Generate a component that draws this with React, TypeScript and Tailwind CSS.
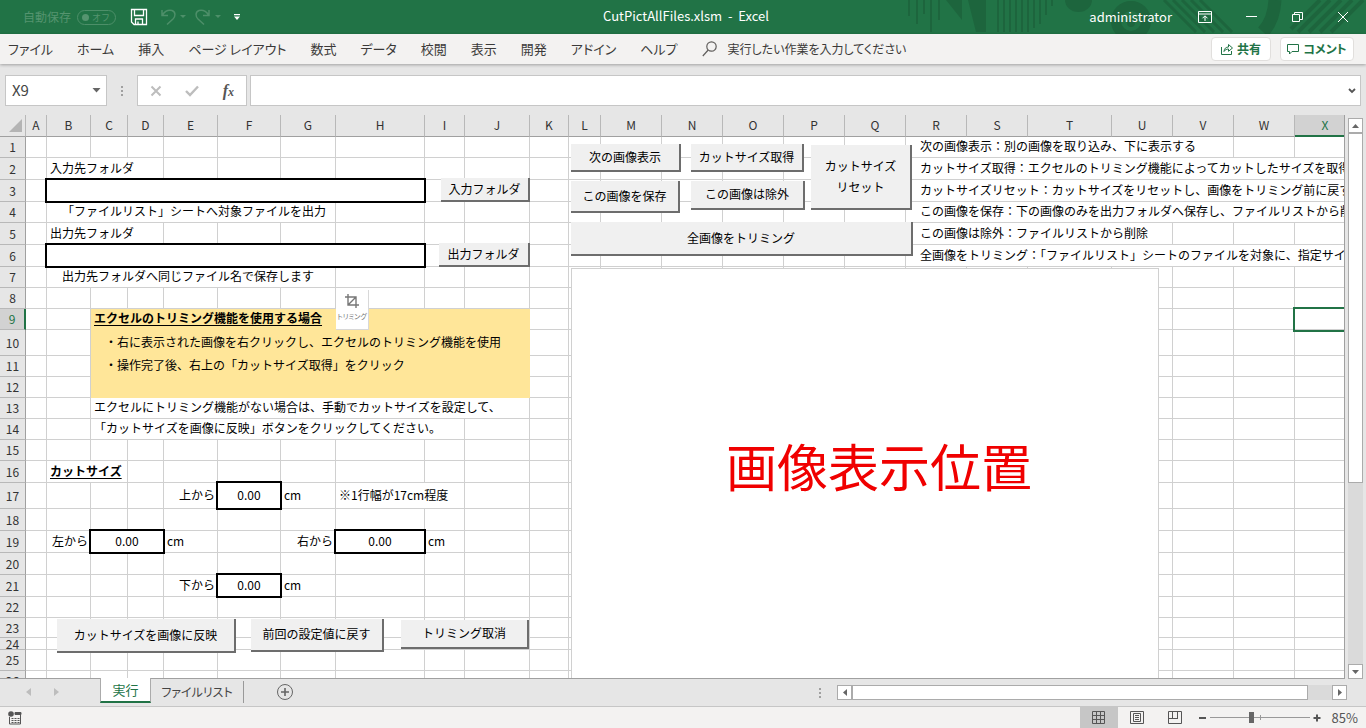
import React from "react";

type Cell = {
  span?: number;
  text?: string;
  htmlFor?: string;
  input?: string;
  label?: string;
  className?: string;
};

const columns: [string, number][] = [
  ["A", 21],
  ["B", 44],
  ["C", 37],
  ["D", 36],
  ["E", 54],
  ["F", 63],
  ["G", 55],
  ["H", 89],
  ["I", 40],
  ["J", 65],
  ["K", 39],
  ["L", 32],
  ["M", 61],
  ["N", 61],
  ["O", 61],
  ["P", 61],
  ["Q", 61],
  ["R", 61],
  ["S", 61],
  ["T", 84],
  ["U", 61],
  ["V", 61],
  ["W", 61],
  ["X", 61],
];

const rowHeights = [
  21, 22, 22, 21, 22, 22, 21, 21, 21, 26, 21, 21, 21, 21, 21, 22, 26, 22, 22,
  22, 22, 21, 20, 12, 21, 21,
];

const yellow = "bg-[#ffe699] border-[#ffe699]";

// keyed by "column + row", like the sheet itself
const cells: Record<string, Cell> = {
  R1: { span: 5, text: "次の画像表示：別の画像を取り込み、下に表示する", className: "pl-[14px]" },
  B2: { span: 3, text: "入力先フォルダ", htmlFor: "in-folder" },
  R2: {
    span: 7,
    text: "カットサイズ取得：エクセルのトリミング機能によってカットしたサイズを取得",
    className: "pl-[14px]",
  },
  B3: { span: 7, input: "", label: "in-folder" },
  R3: {
    span: 7,
    text: "カットサイズリセット：カットサイズをリセットし、画像をトリミング前に戻す",
    className: "pl-[14px]",
  },
  B4: { span: 6, text: "「ファイルリスト」シートへ対象ファイルを出力", className: "pl-[15px]" },
  R4: {
    span: 7,
    text: "この画像を保存：下の画像のみを出力フォルダへ保存し、ファイルリストから削除",
    className: "pl-[14px]",
  },
  B5: { span: 3, text: "出力先フォルダ", htmlFor: "out-folder" },
  R5: { span: 4, text: "この画像は除外：ファイルリストから削除", className: "pl-[14px]" },
  B6: { span: 7, input: "", label: "out-folder" },
  R6: {
    span: 7,
    text: "全画像をトリミング：「ファイルリスト」シートのファイルを対象に、指定サイズ",
    className: "pl-[14px]",
  },
  B7: { span: 6, text: "出力先フォルダへ同じファイル名で保存します", className: "pl-[15px]" },
  C9: {
    span: 8,
    text: "エクセルのトリミング機能を使用する場合",
    className: `${yellow} pl-[3px] font-bold underline underline-offset-2`,
  },
  X9: { className: "relative outline-2 outline-[#217346]" },
  C10: {
    span: 8,
    text: "・右に表示された画像を右クリックし、エクセルのトリミング機能を使用",
    className: `${yellow} pl-[14px]`,
  },
  C11: {
    span: 8,
    text: "・操作完了後、右上の「カットサイズ取得」をクリック",
    className: `${yellow} pl-[14px]`,
  },
  C12: { span: 8, className: yellow },
  C13: { span: 8, text: "エクセルにトリミング機能がない場合は、手動でカットサイズを設定して、" },
  C14: { span: 7, text: "「カットサイズを画像に反映」ボタンをクリックしてください。" },
  B16: { span: 2, text: "カットサイズ", className: "pl-[3px] font-bold underline underline-offset-2" },
  E17: { text: "上から", htmlFor: "cut-top", className: "pr-[2px] text-right" },
  F17: { input: "0.00", label: "cut-top" },
  G17: { text: "cm" },
  H17: { span: 2, text: "※1行幅が17cm程度" },
  B19: { text: "左から", htmlFor: "cut-left", className: "pr-[2px] text-right" },
  C19: { span: 2, input: "0.00", label: "cut-left" },
  E19: { text: "cm" },
  G19: { text: "右から", htmlFor: "cut-right", className: "pr-[2px] text-right" },
  H19: { input: "0.00", label: "cut-right" },
  I19: { text: "cm" },
  E21: { text: "下から", htmlFor: "cut-bottom", className: "pr-[2px] text-right" },
  F21: { input: "0.00", label: "cut-bottom" },
  G21: { text: "cm" },
};

const menus = [
  "ファイル",
  "ホーム",
  "挿入",
  "ページ レイアウト",
  "数式",
  "データ",
  "校閲",
  "表示",
  "開発",
  "アドイン",
  "ヘルプ",
];

// form controls floating over the sheet
const sheetButtons = [
  { text: "入力フォルダ", className: "left-[441px] top-[63px] h-[24px] w-[89px]" },
  { text: "出力フォルダ", className: "left-[439px] top-[128px] h-[24px] w-[91px]" },
  { text: "次の画像表示", className: "left-[571px] top-[29px] h-[28px] w-[110px]" },
  { text: "カットサイズ取得", className: "left-[691px] top-[29px] h-[28px] w-[113px]" },
  { text: "カットサイズ\nリセット", className: "left-[811px] top-[30px] h-[65px] w-[101px]" },
  { text: "この画像を保存", className: "left-[571px] top-[66px] h-[32px] w-[109px]" },
  { text: "この画像は除外", className: "left-[691px] top-[66px] h-[29px] w-[114px]" },
  { text: "全画像をトリミング", className: "left-[571px] top-[107px] h-[34px] w-[342px]" },
  { text: "カットサイズを画像に反映", className: "left-[57px] top-[504px] h-[34px] w-[179px]" },
  { text: "前回の設定値に戻す", className: "left-[251px] top-[504px] h-[33px] w-[133px]" },
  { text: "トリミング取消", className: "left-[401px] top-[505px] h-[29px] w-[128px]" },
];

const TitlePattern = () => (
  <svg
    className="absolute right-0 top-0 h-[34px] w-[460px]"
    viewBox="0 0 460 34"
    fill="none"
    stroke="#1d653d"
    aria-hidden="true"
  >
    <path d="M3 0v16M11 0v24M18 0v14M25 0v32M33 0v20" strokeWidth="2" />
    <path d="M40 0h16v20zM62 0h18v32H70z" fill="#1d653d" stroke="none" />
    <path d="M92 0v32M98 0v32M104 0v32M110 0v32M116 0v32M122 0v32M128 0v28M134 0v24M140 0v15M146 0v6" strokeWidth="2" />
    <path d="M159 0h27a13.500 12 0 0 1-27 0z" fill="#1d653d" stroke="none" />
    <circle cx="225" cy="21" r="15" strokeWidth="10" />
    <circle cx="225" cy="23" r="4" fill="#1d653d" stroke="none" />
    <path d="M258 0l32 32M267 0l32 32M276 0l32 32M285 0l32 32M294 0l32 32" strokeWidth="3" />
    <path d="M369 0q-1 20-12 32" strokeWidth="13" />
    <path d="M414 0l-29 29M424 0l-32 32M435 0l-32 32M446 0l-32 32M457 0l-32 32" strokeWidth="4" />
  </svg>
);

const TitleBar = () => (
  <header className="relative flex h-[34px] shrink-0 items-center bg-[#217346] text-white">
    <TitlePattern />
    <div className="flex flex-1 items-center pl-[23px]">
      <label htmlFor="autosave" className="text-[12px] text-[#55946f]">
        自動保存
      </label>
      <button
        id="autosave"
        role="switch"
        aria-checked="false"
        className="ml-[6px] flex h-[15px] w-[39px] items-center justify-between rounded-full border border-[#4d8f69] pl-[4px] pr-[5px] text-[9px] leading-none text-[#55946f]"
      >
        <span className="h-[7px] w-[7px] rounded-full bg-[#55946f]" />
        オフ
      </button>
      <button aria-label="上書き保存" className="ml-[14px]">
        <svg width="18" height="18" viewBox="0 0 18 18" fill="none" stroke="#fff" strokeWidth="1.300">
          <path d="M1.500 1.500h15v15h-12.500l-2.500-2.500zM4.500 1.500v6h9v-6M5.500 16.500v-5.500h7v5.500M8 16v-2.500" />
        </svg>
      </button>
      <button aria-label="元に戻す" className="ml-[12px]">
        <svg width="26" height="18" viewBox="0 0 26 18" fill="none" stroke="#4d8f69" strokeWidth="1.500">
          <path d="M2 2v5.500h6M2.500 7c3-5 7-5 9.500-4.500c4 1.500 3.500 6 1 8.500l-6 5.500" />
          <path d="M20 7h6l-3 3z" fill="#4d8f69" stroke="none" />
        </svg>
      </button>
      <button aria-label="やり直し" className="ml-[9px]">
        <svg width="26" height="18" viewBox="0 0 26 18" fill="none" stroke="#4d8f69" strokeWidth="1.500">
          <path d="M14 2v5.500h-6M13.500 7c-3-5-7-5-9.500-4.500c-4 1.500-3.500 6-1 8.500l6 5.500" />
          <path d="M20 7h6l-3 3z" fill="#4d8f69" stroke="none" />
        </svg>
      </button>
      <button aria-label="クイック アクセス ツール バーのユーザー設定" className="ml-[12px]">
        <svg width="8" height="8" viewBox="0 0 8 8" fill="#fff">
          <path d="M1 1h6v1.200H1zM1 3.500h6L4 7z" />
        </svg>
      </button>
    </div>
    <h1 className="whitespace-pre pb-[2px] text-[13px]">CutPictAllFiles.xlsm  -  Excel</h1>
    <div className="relative flex flex-1 items-center justify-end pr-[17px]">
      <span className="text-[13px]">administrator</span>
      <button aria-label="リボンの表示オプション" className="ml-[26px]">
        <svg width="14" height="12" viewBox="0 0 14 12" fill="none" stroke="#fff">
          <path d="M.5.5h13v11H.5zM.5 3h13M7 10V5M4.500 7.300L7 4.800l2.500 2.500" />
        </svg>
      </button>
      <button aria-label="最小化" className="ml-[34px]">
        <svg width="11" height="12" viewBox="0 0 11 12" stroke="#fff">
          <path d="M0 5.500h11" />
        </svg>
      </button>
      <button aria-label="元に戻す (縮小)" className="ml-[35px]">
        <svg width="11" height="12" viewBox="0 0 11 12" fill="none" stroke="#fff">
          <path d="M.5 3.500h7v7h-7zM2.500 3.500v-2h8v7H8" />
        </svg>
      </button>
      <button aria-label="閉じる" className="ml-[34px]">
        <svg width="12" height="12" viewBox="0 0 12 12" stroke="#fff">
          <path d="M1 1l10 10M11 1L1 11" />
        </svg>
      </button>
    </div>
  </header>
);

const MenuBar = () => (
  <nav className="z-10 flex h-[30px] shrink-0 items-center bg-[#f3f2f1] pl-[8px] pr-[12px] text-[13px] text-[#3b3a39] shadow-[0_1px_3px_rgba(0,0,0,0.300)] [font-feature-settings:'palt']">
    <div className="flex items-center gap-[24px]">
      {menus.map((name) => (
        <button key={name} className="whitespace-nowrap">
          {name}
        </button>
      ))}
    </div>
    <button className="ml-[24px] flex items-center gap-[11px] whitespace-nowrap text-[12px]">
      <svg width="15" height="16" viewBox="0 0 15 16" fill="none" stroke="#605e5c" strokeWidth="1.200">
        <circle cx="9.500" cy="5.500" r="4.700" />
        <path d="M6.200 9L.8 15" />
      </svg>
      実行したい作業を入力してください
    </button>
    <div className="ml-auto flex gap-[9px] text-[12px] font-bold text-[#217346]">
      <button className="flex h-[24px] w-[60px] items-center justify-center gap-[4px] rounded-sm border border-[#e1dfdd] bg-white">
        <svg width="12" height="12" viewBox="0 0 12 12" fill="none" stroke="#217346">
          <path d="M.5 4v7.500h10V8M3 8.500C3.200 5.500 5 4 7.500 4V1.500L11.500 5 7.500 8.300V6C5.500 6 4 6.800 3 8.500z" />
        </svg>
        共有
      </button>
      <button className="flex h-[24px] w-[74px] items-center justify-center gap-[4px] rounded-sm border border-[#e1dfdd] bg-white">
        <svg width="12" height="12" viewBox="0 0 12 12" fill="none" stroke="#217346">
          <path d="M.5 1.500h11v7H5L2.500 11V8.500h-2z" />
        </svg>
        コメント
      </button>
    </div>
  </nav>
);

const FormulaBar = () => (
  <div className="flex h-[51px] shrink-0 items-start bg-[#e6e6e6] pl-[5px] pr-[5px] pt-[11px]">
    <div className="relative flex h-[31px] w-[102px] items-center border border-[#c6c6c6] bg-white">
      <input
        aria-label="名前ボックス"
        defaultValue="X9"
        className="w-full pl-[6px] text-[15px] text-[#444] outline-none"
      />
      <svg className="absolute right-[5px]" width="9" height="5" viewBox="0 0 9 5" fill="#666">
        <path d="M.5 0h8l-4 4.500z" />
      </svg>
    </div>
    <div className="flex h-[31px] w-[30px] flex-col items-center justify-center gap-[2px]">
      <span className="h-[2px] w-[2px] bg-[#a0a0a0]" />
      <span className="h-[2px] w-[2px] bg-[#a0a0a0]" />
      <span className="h-[2px] w-[2px] bg-[#a0a0a0]" />
    </div>
    <div className="flex h-[31px] w-[110px] items-center justify-between border border-[#c6c6c6] bg-white pl-[12px] pr-[12px]">
      <button aria-label="キャンセル">
        <svg width="12" height="12" viewBox="0 0 12 12" stroke="#bdbdbd" strokeWidth="2">
          <path d="M1.500 1.500l9 9M10.500 1.500l-9 9" />
        </svg>
      </button>
      <button aria-label="入力">
        <svg width="14" height="12" viewBox="0 0 14 12" fill="none" stroke="#bdbdbd" strokeWidth="2.400">
          <path d="M1 6l4 4 8-8.500" />
        </svg>
      </button>
      <button aria-label="関数の挿入" className="font-['Liberation_Serif',serif] text-[16px] font-bold italic leading-none text-[#555]">
        f<span className="text-[12px]">x</span>
      </button>
    </div>
    <div className="relative ml-[3px] flex h-[31px] flex-1 items-center border border-[#c6c6c6] bg-white">
      <input aria-label="数式バー" className="w-full px-[6px] text-[14px] outline-none" />
      <svg className="absolute right-[4px]" width="8" height="6" viewBox="0 0 8 6" fill="none" stroke="#555" strokeWidth="1.800">
        <path d="M1 1l3 3 3-3" />
      </svg>
    </div>
  </div>
);

const renderRow = (row: number) => {
  const out: React.ReactNode[] = [];
  let i = 0;
  while (i < columns.length) {
    const id = `${columns[i][0]}${row}`;
    const cell = cells[id];
    const span = cell?.span ?? 1;
    out.push(
      <td
        key={id}
        colSpan={span}
        className={`h-px whitespace-nowrap border-b border-r ${cell?.text ? "pb-[2px]" : ""} ${
          cell?.className?.includes("border-[") ? "" : "border-[#d0d0d0]"
        } ${cell?.text && !cell.className ? "pl-[3px]" : ""} ${cell?.className ?? ""}`}
      >
        {cell?.input !== undefined && (
          <input
            id={cell.label}
            defaultValue={cell.input}
            className="relative block h-full w-full bg-white pb-[2px] text-center outline-2 outline-black"
          />
        )}
        {cell?.htmlFor ? <label htmlFor={cell.htmlFor}>{cell.text}</label> : cell?.text}
      </td>,
    );
    i += span;
  }
  return out;
};

const Sheet = () => (
  <main className="relative min-w-0 flex-1 overflow-hidden border-b border-r border-[#a0a0a0] bg-white">
    <table className="w-[1356px] table-fixed border-separate border-spacing-0 text-[12px] leading-[12px] text-black">
      <colgroup>
        <col className="w-[26px]" />
        {columns.map(([name, width]) => (
          <col key={name} style={{ width }} />
        ))}
      </colgroup>
      <thead>
        <tr className="h-[22px]">
          <th className="border-b border-r border-b-[#a0a0a0] border-r-[#b8b8b8] bg-[#e6e6e6] p-0">
            <svg className="ml-auto mr-[3px]" width="13" height="13" viewBox="0 0 13 13" fill="#b4b4b4">
              <path d="M13 0v13H0z" />
            </svg>
          </th>
          {columns.map(([name]) => (
            <th
              key={name}
              scope="col"
              className={
                name === "X"
                  ? "border-b-2 border-r border-b-[#217346] border-r-[#b8b8b8] bg-[#d2d2d2] p-0 font-normal text-[#217346]"
                  : "border-b border-r border-b-[#a0a0a0] border-r-[#b8b8b8] bg-[#e6e6e6] pb-px font-normal text-[#333]"
              }
            >
              {name}
            </th>
          ))}
        </tr>
      </thead>
      <tbody>
        {rowHeights.map((height, index) => (
          <tr key={index} style={{ height }}>
            <th
              scope="row"
              className={
                index === 8
                  ? "border-b border-r-2 border-b-[#b8b8b8] border-r-[#217346] bg-[#d2d2d2] p-0 font-normal text-[#217346]"
                  : "border-b border-r border-b-[#b8b8b8] border-r-[#a0a0a0] bg-[#e6e6e6] p-0 font-normal text-[#333]"
              }
            >
              <div className="flex items-center justify-center" style={{ height: Math.min(height - 1, 14) }}>
                {index + 1}
              </div>
            </th>
            {renderRow(index + 1)}
          </tr>
        ))}
      </tbody>
    </table>

    {/* picture frame */}
    <div className="absolute left-[571px] top-[153px] flex min-h-full w-[588px] items-start justify-center border border-[#d0d0d0] bg-white pt-[160px]">
      <p className="pl-[28px] text-[51px] leading-[72px] text-[#f00000]">画像表示位置</p>
    </div>

    {/* crop tool hint */}
    <div className="absolute left-[336px] top-[175px] flex h-[40px] w-[33px] flex-col items-center gap-[3px] border-b border-r border-[#d8d8d8] bg-white pt-[4px] text-[#777]">
      <svg width="14" height="14" viewBox="0 0 14 14" fill="none" stroke="currentColor" strokeWidth="1.400">
        <path d="M3 0v11h11M0 3h11v11M3 11l8-8" />
      </svg>
      <span className="whitespace-nowrap text-[7px] leading-[10px] [font-feature-settings:'palt']">トリミング</span>
    </div>

    {sheetButtons.map(({ text, className }) => (
      <button
        key={text}
        className={`absolute whitespace-pre border-b-2 border-r-2 border-[#6d6d6d] bg-[#f0f0f0] pb-[2px] text-[12px] leading-[21px] text-black ${className}`}
      >
        {text}
      </button>
    ))}
  </main>
);

const scrollButton = "flex h-[15px] w-[15px] shrink-0 items-center justify-center border border-[#ababab] bg-white";

const VerticalScroll = () => (
  <div className="flex w-[21px] shrink-0 flex-col bg-[#e6e6e6] pl-[3px] pt-[3px]">
    <button aria-label="上へスクロール" className={scrollButton}>
      <svg width="7" height="4" viewBox="0 0 7 4" fill="#666">
        <path d="M3.500 0L7 4H0z" />
      </svg>
    </button>
    <div className="w-[15px] flex-1 bg-[#dadada]">
      <div className="h-[66%] border border-[#ababab] bg-white" />
    </div>
    <button aria-label="下へスクロール" className={scrollButton}>
      <svg width="7" height="4" viewBox="0 0 7 4" fill="#666">
        <path d="M0 0h7L3.500 4z" />
      </svg>
    </button>
  </div>
);

const SheetTabs = () => (
  <div className="flex h-[28px] shrink-0 items-start border-b border-[#c6c6c6] bg-[#e6e6e6] pl-[26px] pr-[19px] text-[13px] [font-feature-settings:'palt']">
    <div className="flex h-[26px] w-[74px] items-center gap-[23px]">
      <button aria-label="前のシート">
        <svg width="5" height="8" viewBox="0 0 5 8" fill="#bdbdbd">
          <path d="M5 0v8L0 4z" />
        </svg>
      </button>
      <button aria-label="次のシート">
        <svg width="5" height="8" viewBox="0 0 5 8" fill="#bdbdbd">
          <path d="M0 0v8l5-4z" />
        </svg>
      </button>
    </div>
    <button className="z-10 -mt-px h-[25px] w-[51px] border-x border-b-2 border-x-[#ababab] border-b-[#217346] bg-white text-[#217346]">
      実行
    </button>
    <button className="mt-[2px] h-[22px] w-[93px] border-r border-[#999] text-[12px] leading-[20px] text-[#444]">ファイルリスト</button>
    <button aria-label="新しいシート" className="ml-[33px] mt-[5px]">
      <svg width="16" height="16" viewBox="0 0 16 16" fill="none" stroke="#666">
        <circle cx="8" cy="8" r="7.500" />
        <path d="M8 4v8M4 8h8" strokeWidth="1.600" />
      </svg>
    </button>
    <div className="ml-auto mt-[6px] flex h-[15px] w-[528px] items-center">
      <div className="flex w-[18px] flex-col gap-[2px]">
        <span className="h-[2px] w-[2px] bg-[#a0a0a0]" />
        <span className="h-[2px] w-[2px] bg-[#a0a0a0]" />
        <span className="h-[2px] w-[2px] bg-[#a0a0a0]" />
      </div>
      <button aria-label="左へスクロール" className={scrollButton}>
        <svg width="4" height="7" viewBox="0 0 4 7" fill="#666">
          <path d="M4 0v7L0 3.500z" />
        </svg>
      </button>
      <div className="h-[15px] flex-1 bg-[#dadada]">
        <div className="h-full w-[95%] border border-[#ababab] bg-white" />
      </div>
      <button aria-label="右へスクロール" className={scrollButton}>
        <svg width="4" height="7" viewBox="0 0 4 7" fill="#666">
          <path d="M0 0v7l4-3.500z" />
        </svg>
      </button>
    </div>
  </div>
);

const StatusBar = () => (
  <footer className="flex h-[21px] shrink-0 items-center justify-between bg-[#f3f2f1] pl-[8px] pr-[8px] text-[12px] text-[#555]">
    <button aria-label="マクロの記録">
      <svg width="14" height="14" viewBox="0 0 14 14" fill="none" stroke="#555">
        <path d="M1.500 6v7h11V3.500" />
        <path d="M3.500 7.500h8M3.500 9.500h8M3.500 11.500h8" strokeDasharray="2 1" />
        <path d="M7 1.500h6v2H7z" fill="#555" />
        <circle cx="3" cy="3" r="2.800" fill="#555" stroke="none" />
      </svg>
    </button>
    <div className="flex h-full items-center">
      <button aria-label="標準" className="flex h-full w-[38px] items-center justify-center bg-[#c6c6c6]">
        <svg width="13" height="13" viewBox="0 0 13 13" fill="none" stroke="#555">
          <path d="M.5.5h12v12H.5zM4.500 0v13M8.500 0v13M0 4.500h13M0 8.500h13" />
        </svg>
      </button>
      <button aria-label="ページ レイアウト" className="flex h-full w-[38px] items-center justify-center">
        <svg width="14" height="13" viewBox="0 0 14 13" fill="none" stroke="#555">
          <path d="M.5.5h13v12H.5zM3.500 2.500h7v8h-7zM5 4.500h4M5 6.500h4M5 8.500h4" />
        </svg>
      </button>
      <button aria-label="改ページ プレビュー" className="flex h-full w-[38px] items-center justify-center">
        <svg width="14" height="13" viewBox="0 0 14 13" fill="none" stroke="#555">
          <path d="M.5.5h13v12H.5zM4.500 0v7.500M9.500 0v7.500M0 7.500h10" />
        </svg>
      </button>
      <button aria-label="縮小" className="ml-[5px] h-[2px] w-[7px] bg-[#555]" />
      <div className="relative ml-[4px] flex h-full w-[100px] items-center">
        <input
          type="range"
          aria-label="ズーム"
          min={0}
          max={100}
          defaultValue={42}
          className="h-px w-full appearance-none bg-[#999] [&::-webkit-slider-thumb]:h-[11px] [&::-webkit-slider-thumb]:w-[5px] [&::-webkit-slider-thumb]:appearance-none [&::-webkit-slider-thumb]:bg-[#666]"
        />
        <span className="absolute left-[50px] h-[5px] w-px bg-[#999]" />
      </div>
      <button aria-label="拡大" className="ml-[3px]">
        <svg width="8" height="8" viewBox="0 0 8 8" stroke="#555" strokeWidth="2">
          <path d="M4 .5v7M.5 4h7" />
        </svg>
      </button>
      <span className="ml-[11px] text-[13px]">85%</span>
    </div>
  </footer>
);

const App = () => {
  return (
    <div className="flex h-screen flex-col overflow-hidden bg-[#e6e6e6] font-['Noto_Sans_CJK_JP',sans-serif]">
      <TitleBar />
      <MenuBar />
      <FormulaBar />
      <div className="flex min-h-0 flex-1">
        <Sheet />
        <VerticalScroll />
      </div>
      <SheetTabs />
      <StatusBar />
    </div>
  );
};

export default App;
